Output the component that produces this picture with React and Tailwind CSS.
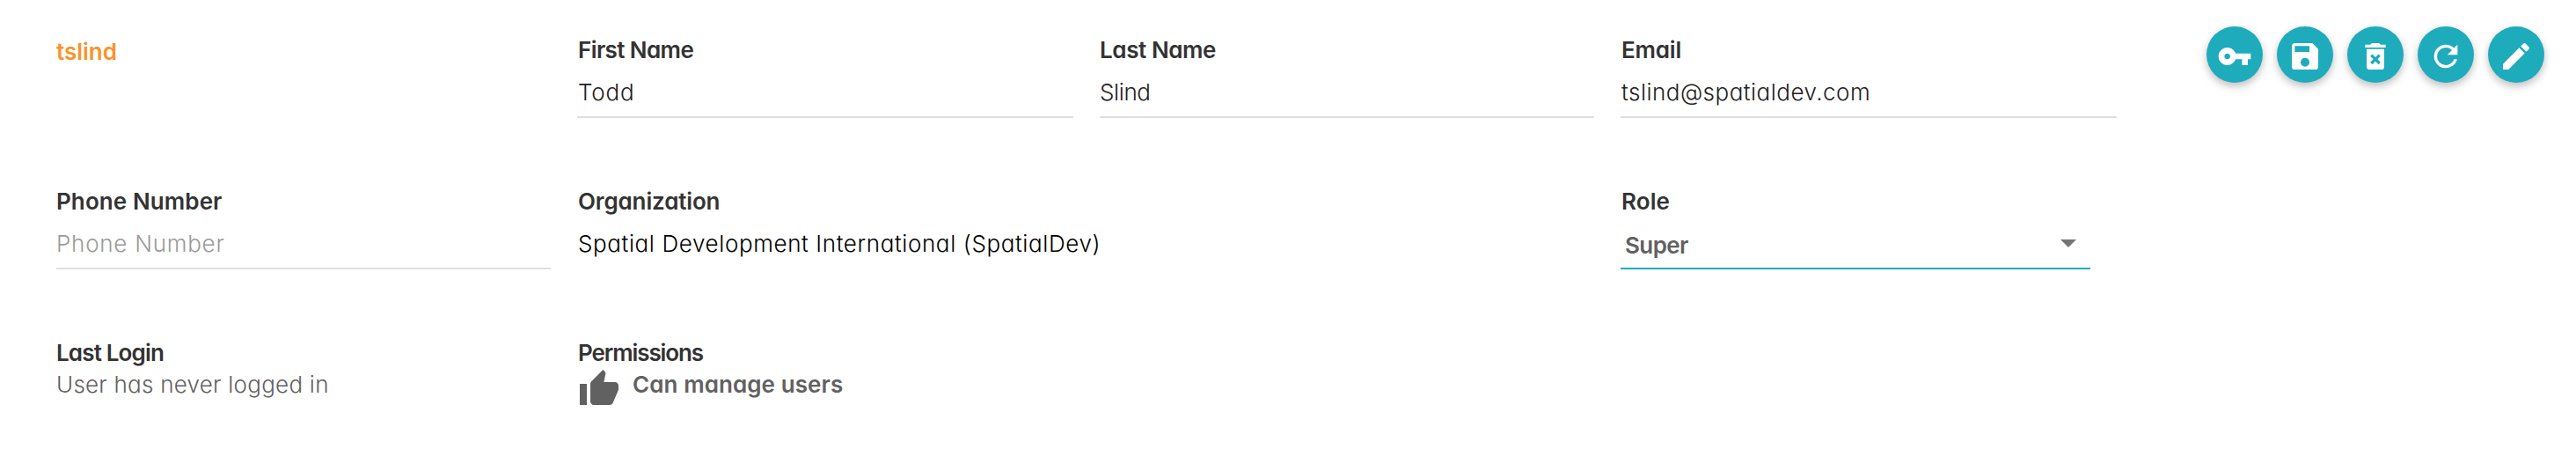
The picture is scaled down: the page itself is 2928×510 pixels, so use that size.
const ICONS = {
  key: 'M12.65 10C11.83 7.67 9.61 6 7 6c-3.31 0-6 2.69-6 6s2.69 6 6 6c2.61 0 4.83-1.67 5.65-4H17v4h4v-4h2v-4H12.65zM7 14c-1.1 0-2-.9-2-2s.9-2 2-2 2 .9 2 2-.9 2-2 2z',
  save: 'M15,9H5V5H15M12,19A3,3 0 0,1 9,16A3,3 0 0,1 12,13A3,3 0 0,1 15,16A3,3 0 0,1 12,19M17,3H5C3.89,3 3,3.9 3,5V19A2,2 0 0,0 5,21H19A2,2 0 0,0 21,19V7L17,3Z',
  trash:
    'M6,19A2,2 0 0,0 8,21H16A2,2 0 0,0 18,19V7H6V19M8.46,11.88L9.87,10.47L12,12.59L14.12,10.47L15.53,11.88L13.41,14L15.53,16.12L14.12,17.53L12,15.41L9.88,17.53L8.47,16.12L10.59,14L8.46,11.88M15.5,4L14.5,3H9.5L8.5,4H5V6H19V4H15.5Z',
  refresh:
    'M17.65,6.35C16.2,4.9 14.21,4 12,4A8,8 0 0,0 4,12A8,8 0 0,0 12,20C15.73,20 18.84,17.45 19.73,14H17.65C16.83,16.33 14.61,18 12,18A6,6 0 0,1 6,12A6,6 0 0,1 12,6C13.66,6 15.14,6.69 16.22,7.78L13,11H20V4L17.65,6.35Z',
  pencil:
    'M3 17.25V21h3.75L17.81 9.94l-3.75-3.75L3 17.25zM20.71 7.04c.39-.39.39-1.02 0-1.41l-2.34-2.34c-.39-.39-1.02-.39-1.41 0l-1.83 1.83 3.75 3.75 1.83-1.83z',
  thumb:
    'M1 21h4V9H1v12zm22-11c0-1.1-.9-2-2-2h-6.31l.95-4.57.03-.32c0-.41-.17-.79-.44-1.06L14.17 1 7.59 7.59C7.22 7.95 7 8.45 7 9v10c0 1.1.9 2 2 2h9c.83 0 1.54-.5 1.84-1.22l3.02-7.05c.09-.23.14-.47.14-.73V10z',
};

function Icon({ name, className }) {
  return (
    <svg viewBox="0 0 24 24" fill="currentColor" fillRule="nonzero" className={className} aria-hidden="true">
      <path d={ICONS[name]} />
    </svg>
  );
}

function Label({ children, className }) {
  return <div className={`h-8 font-semibold text-[#333333] ${className}`}>{children}</div>;
}

function Field({ label, labelClass, value, valueClass }) {
  return (
    <div className="pr-[30px]">
      <Label className={labelClass}>{label}</Label>
      <div className={`mt-[9px] h-[52px] border-b-2 border-[#e0e0e0] pt-[7px] font-light ${valueClass}`}>{value}</div>
    </div>
  );
}

function ActionButton({ icon, label }) {
  return (
    <button
      type="button"
      aria-label={label}
      className="flex size-16 items-center justify-center rounded-full bg-[#1eabbc] pt-1 text-white shadow-[0_4px_10px_rgba(0,0,0,0.26)]"
    >
      <Icon name={icon} className="size-10" />
    </button>
  );
}

export default function App() {
  return (
    <main className="flex h-[510px] w-[2928px] items-start overflow-hidden bg-white pl-16 font-['Inter','Open_Sans',sans-serif] text-[26px] leading-8 whitespace-nowrap [font-feature-settings:'cv11']">
      <div className="grid grid-cols-[592px_594px_592px_594px] grid-rows-[172px_172px_125px] pt-[41px]">
        <div className="pt-0.5 font-semibold tracking-[0px] text-[#f7942d]">tslind</div>
        <Field label="First Name" labelClass="pl-px tracking-[-0.6px]" value="Todd" valueClass="pl-px tracking-[0.8px] text-[#212121]" />
        <Field label="Last Name" labelClass="tracking-[-0.4px]" value="Slind" valueClass="tracking-[-0.38px] text-[#212121]" />
        <Field label="Email" labelClass="pl-px tracking-[-0.2px]" value="tslind@spatialdev.com" valueClass="pl-px tracking-[0.48px] text-[#212121]" />

        <Field label="Phone Number" labelClass="tracking-[0.1px]" value="Phone Number" valueClass="tracking-[0.75px] text-[#9a9a9a]" />
        <div className="col-span-2 pl-px">
          <Label className="tracking-[-0.15px]">Organization</Label>
          <div className="mt-4 font-light tracking-[0.61px] text-black">Spatial Development International (SpatialDev)</div>
        </div>
        <div>
          <Label className="pl-px tracking-[0.1px]">Role</Label>
          <div className="mt-[9px] flex h-[52px] w-[534px] justify-between border-b-2 border-[#1eabbc] pt-[9px] pl-[5px]">
            <span className="font-semibold tracking-[-0.6px] text-[#616161]">Super</span>
            <svg viewBox="0 0 18 9" className="mt-[9px] mr-4 h-[9px] w-[18px]" aria-hidden="true">
              <path d="M0 0H18L9 9Z" fill="#757575" />
            </svg>
          </div>
        </div>

        <div>
          <Label className="tracking-[-0.85px]">Last Login</Label>
          <div className="mt-1 font-light tracking-[0.25px] text-[#616161]">User has never logged in</div>
        </div>
        <div className="pl-px">
          <Label className="tracking-[-1.1px]">Permissions</Label>
          <div className="mt-px flex">
            <Icon name="thumb" className="size-12 text-[#616161]" />
            <span className="mt-[3px] ml-[14px] font-semibold tracking-[0.08px] text-[#616161]">Can manage users</span>
          </div>
        </div>
      </div>

      <div className="ml-[72px] flex gap-4 pt-[30px]">
        <ActionButton icon="key" label="Reset password" />
        <ActionButton icon="save" label="Save" />
        <ActionButton icon="trash" label="Delete" />
        <ActionButton icon="refresh" label="Refresh" />
        <ActionButton icon="pencil" label="Edit" />
      </div>
    </main>
  );
}
